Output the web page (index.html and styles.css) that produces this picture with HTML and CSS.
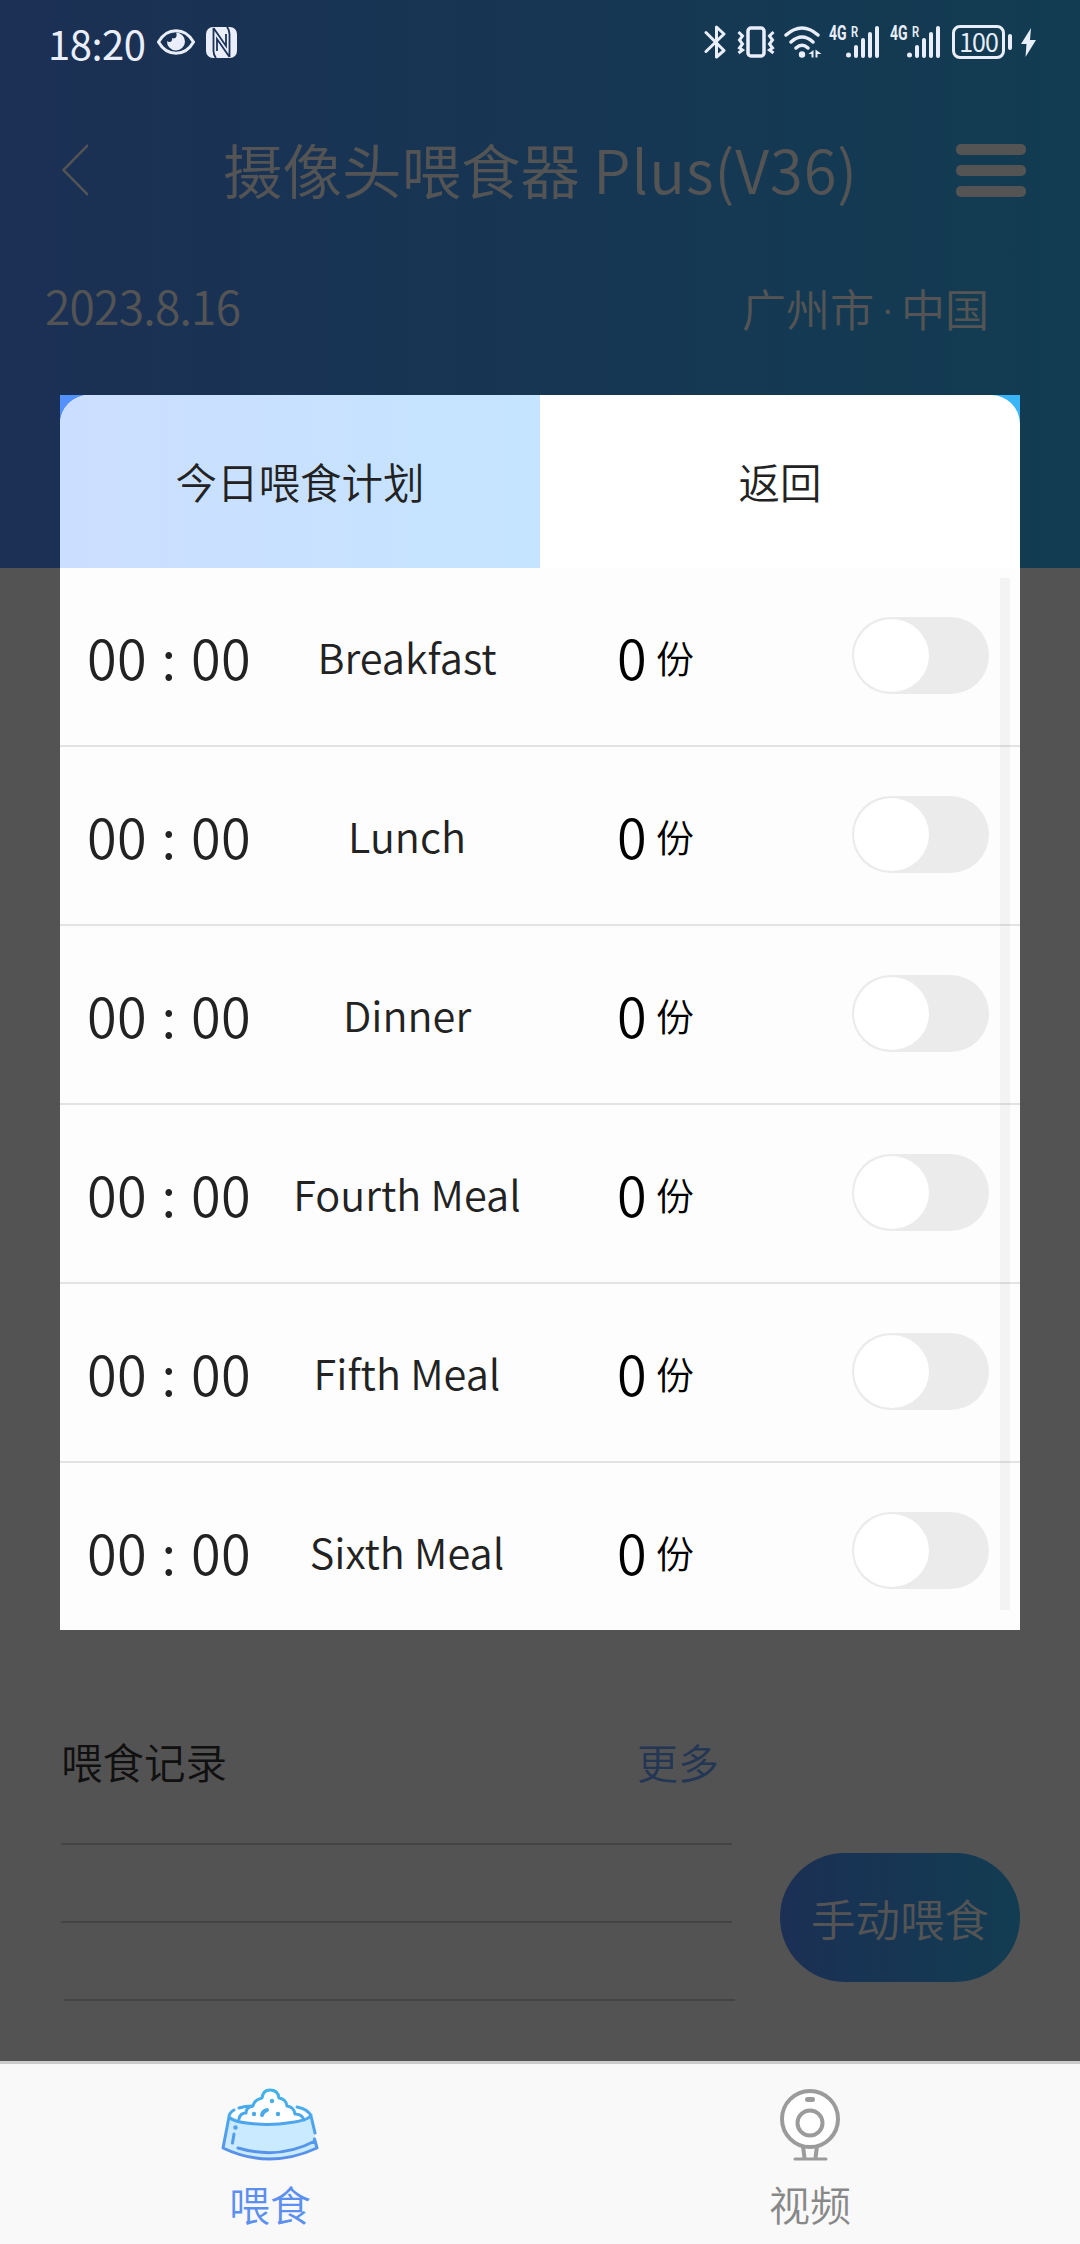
FILE: index.html
```html
<!DOCTYPE html>
<html lang="zh-CN">
<head>
  <meta charset="UTF-8" />
  <meta name="viewport" content="width=device-width, initial-scale=1.0"/>
  <title>摄像头喂食器 Plus(V36)</title>
  <link rel="stylesheet" href="styles.css">
</head>
<body>
  <div class="screen">
    <div class="top">
      <!-- Status bar -->
      <div class="status-bar">
        <span class="clock">18:20</span>
        <svg class="icon-eye" width="38" height="26" viewBox="0 0 38 26">
          <path d="M1.500 13C10-2 28-2 36.500 13C28 28 10 28 1.500 13Z" fill="none" stroke="#e9eefa" stroke-width="3"/>
          <path d="M10 12a9 9 0 1 0 9-8.500c2 4-1 7-4 5.500c1 4-3 5-5 3z" fill="#e9eefa"/>
        </svg>
        <svg class="icon-nfc" width="31" height="31" viewBox="0 0 31 31">
          <rect width="31" height="31" rx="7" fill="#e9eefa"/>
          <path d="M10 31Q7.500 28 7.500 24V1M7.500 1L20 19V7M21 0Q23.500 3 23.500 7V30M23.500 30L11 12V24" fill="none" stroke="#1b3158" stroke-width="1.800"/>
        </svg>
        <div class="status-right">
          <svg width="22" height="34" viewBox="0 0 22 34" fill="none" stroke="#e9eefa" stroke-width="3" stroke-linejoin="round" stroke-linecap="round">
            <path d="M2 7.500L20 25.500L12.500 32V2L20 9L2 26.500"/>
          </svg>
          <svg class="icon-vibrate" width="38" height="32" viewBox="0 0 38 32" fill="none" stroke="#e9eefa">
            <rect x="11" y="2" width="16" height="28" rx="3" stroke-width="3.500"/>
            <path d="M1.500 6l4 4-3 4 3 4-3 4 3 2-4 3M36.500 6l-4 4 3 4-3 4 3 4-3 2 4 3" stroke-width="3"/>
          </svg>
          <svg class="icon-wifi" width="38" height="32" viewBox="0 0 38 32" fill="none" stroke="#e9eefa" stroke-width="3.500" stroke-linecap="round">
            <path d="M2 9Q18 -5 34 9M7 16Q18 6 29 16M12 22Q18 16.500 24 22"/>
            <circle cx="18" cy="28.500" r="3.200" fill="#e9eefa" stroke="none"/>
            <path d="M24.500 28l5-4v7.500h-2V28zM31.500 23.500l6 4.500-4 0v3.500h-2z" fill="#e9eefa" stroke="none"/>
          </svg>
          <div class="signal">
            <span class="net">4G</span><span class="roam">R</span>
            <svg width="34" height="32" viewBox="0 0 34 32" fill="#e9eefa">
              <circle cx="2.500" cy="29" r="2.500"/><rect x="8" y="19" width="4" height="13" rx="2"/><rect x="15" y="12" width="4" height="20" rx="2"/><rect x="22" y="6" width="4" height="26" rx="2"/><rect x="29" y="0" width="4" height="32" rx="2"/>
            </svg>
          </div>
          <div class="signal second">
            <span class="net">4G</span><span class="roam">R</span>
            <svg width="34" height="32" viewBox="0 0 34 32" fill="#e9eefa">
              <circle cx="2.500" cy="29" r="2.500"/><rect x="8" y="19" width="4" height="13" rx="2"/><rect x="15" y="12" width="4" height="20" rx="2"/><rect x="22" y="6" width="4" height="26" rx="2"/><rect x="29" y="0" width="4" height="32" rx="2"/>
            </svg>
          </div>
          <div class="battery">100</div>
          <svg class="icon-bolt" width="15" height="29" viewBox="0 0 15 29"><path d="M10 0L0 16h5.500L4.500 29L15 12H9z" fill="#e9eefa"/></svg>
        </div>
      </div>

      <!-- Title -->
      <header>
        <svg width="26" height="52" viewBox="0 0 26 52"><path d="M26 1L1.500 26L26 51" fill="none" stroke="#fff" stroke-width="2.500"/></svg>
        <h1>摄像头喂食器 <span>Plus(V36)</span></h1>
        <div class="menu"><i></i><i></i><i></i></div>
      </header>
      <div class="info">
        <span class="date">2023.8.16</span>
        <span class="city">广州市<span class="dot">·</span>中国</span>
      </div>
    </div>

    <!-- Feeding records -->
    <div class="records">
      <div class="record-list">
        <div class="record-head">
          <h2>喂食记录</h2>
          <a class="more">更多</a>
        </div>
        <div class="line"></div>
        <div class="line"></div>
        <div class="line last"></div>
      </div>
      <button class="feed-btn">手动喂食</button>
    </div>

    <!-- Bottom tabs -->
    <nav>
      <div class="tab active">
        <svg width="98" height="74" viewBox="0 0 98 74" fill="none" stroke-width="3" stroke-linecap="round" stroke-linejoin="round">
          <defs>
            <linearGradient id="bowl" gradientUnits="userSpaceOnUse" x1="0" y1="0" x2="0" y2="74">
              <stop offset="0" stop-color="#42b4ea"/>
              <stop offset="0.5" stop-color="#4da4ee"/>
              <stop offset="1" stop-color="#5b8ce8"/>
            </linearGradient>
          </defs>
          <path d="M8 28L2 60Q48 82 96 60L90 28Q50 43 8 28Z" fill="#c9eaff"/>
          <path d="M8 27Q12 20 32 18L66 18Q86 20 90 26Q74 36 48 36Q22 36 8 27Z" fill="#fff"/>
          <path d="M17 32Q19 25 25 25Q25 19 32 18Q33 12 41 10Q42 2 49 2Q57 2 58 10Q65 11 66 18Q73 19 74 26Q81 26 83 33Q50 41 17 32Z" fill="#fff"/>
          <g stroke="url(#bowl)">
            <path d="M18 31Q19 25 25 25Q25 19 32 18Q33 12 41 10Q42 2 49 2Q57 2 58 10Q65 11 66 18Q73 19 74 26Q81 26 83 32"/>
            <path d="M13 22Q8 25 8 29L2 60Q48 82 96 60L93.500 51M18 20Q24 18 31 18M76 19Q87 21 90 28L94 45M8 29Q12 34 30 35.500Q50 38 70 34.500Q88 32 90 27M17 60Q58 72 94 53M13 46L11.500 55"/>
            <path d="M41 27Q42 23 46 22" stroke-width="4"/>
          </g>
          <g fill="url(#bowl)"><circle cx="51" cy="13" r="2.200"/><circle cx="33" cy="26" r="2.200"/><circle cx="57" cy="26" r="2.200"/><circle cx="14.500" cy="39.500" r="2.200"/></g>
        </svg>
        <span>喂食</span>
      </div>
      <div class="tab">
        <svg width="62" height="74" viewBox="0 0 62 74" fill="none" stroke="#9b9b9b" stroke-width="4">
          <path d="M24 58l1.500 12M38 58l-1.500 12"/>
          <circle cx="31" cy="31" r="28" fill="#fff"/>
          <circle cx="31" cy="35" r="12.500"/>
          <path d="M28.500 11.500h5" stroke-width="5" stroke-linecap="round"/>
          <path d="M16 71h31" stroke-linecap="round" stroke-width="3"/>
        </svg>
        <span>视频</span>
      </div>
    </nav>

    <!-- Feeding plan dialog -->
    <div class="overlay">
      <div class="dialog">
        <div class="dialog-tabs">
          <div class="dialog-tab selected">今日喂食计划</div>
          <div class="dialog-tab">返回</div>
        </div>
        <div class="meals">
          <div class="meal"><span class="time">00 : 00</span><span class="name">Breakfast</span><span class="count">0</span><span class="unit">份</span><span class="switch"></span></div>
          <div class="meal"><span class="time">00 : 00</span><span class="name">Lunch</span><span class="count">0</span><span class="unit">份</span><span class="switch"></span></div>
          <div class="meal"><span class="time">00 : 00</span><span class="name">Dinner</span><span class="count">0</span><span class="unit">份</span><span class="switch"></span></div>
          <div class="meal"><span class="time">00 : 00</span><span class="name">Fourth Meal</span><span class="count">0</span><span class="unit">份</span><span class="switch"></span></div>
          <div class="meal"><span class="time">00 : 00</span><span class="name">Fifth Meal</span><span class="count">0</span><span class="unit">份</span><span class="switch"></span></div>
          <div class="meal"><span class="time">00 : 00</span><span class="name">Sixth Meal</span><span class="count">0</span><span class="unit">份</span><span class="switch"></span></div>
          <div class="scrollbar"></div>
        </div>
      </div>
    </div>
  </div>
</body>
</html>
```

FILE: styles.css
```css
* {
  box-sizing: border-box;
}

body {
  margin: 0;
  font-family: "Noto Sans CJK SC", "Noto Sans", sans-serif;
  font-weight: 350;
  color: #222;
}

svg {
  display: block;
  flex: none;
}

.screen {
  position: relative;
  width: 1080px;
  height: 2244px;
  display: flex;
  flex-direction: column;
  background: #fafafa;
  overflow: hidden;
}

/* Blue header */
.top {
  flex: none;
  height: 568px;
  background: linear-gradient(90deg, #5391ff, #38b6f8);
  color: #fff;
}

.status-bar {
  position: relative;
  z-index: 2; /* stays bright above the overlay */
  height: 84px;
  padding: 0 44px 0 48px;
  display: flex;
  align-items: center;
  color: #e9eefa;
}

.clock {
  width: 109px;
  font-size: 40px;
  line-height: 84px;
  padding-top: 2px;
  letter-spacing: -0.5px;
  font-weight: 400;
}

.icon-nfc {
  margin-left: 11px;
}

.status-right {
  display: flex;
  align-items: center;
  margin-left: auto;
}

.icon-vibrate {
  margin-left: 11px;
}

.icon-wifi {
  margin-left: 9px;
}

.signal {
  display: flex;
  align-items: flex-start;
  width: 51px;
  height: 32px;
  margin-left: 7px;
  font-family: Roboto, sans-serif;
}

.signal.second {
  margin-left: 10px;
}

.signal svg {
  margin-left: -11px;
}

.net {
  width: 22px;
  flex: none;
  font-size: 20px;
  font-weight: 700;
  line-height: 15px;
  transform: scaleX(0.7);
  transform-origin: left;
}

.roam {
  width: 6px;
  flex: none;
  font-size: 15px;
  font-weight: 600;
  line-height: 12px;
  transform: scaleX(0.75);
  transform-origin: left;
}

.battery {
  position: relative;
  width: 53px;
  height: 34px;
  margin-left: 11px;
  border: 3px solid #e9eefa;
  border-radius: 8px;
  font-size: 25px;
  font-weight: 400;
  line-height: 26px;
  text-align: center;
  letter-spacing: -1px;
}

.battery::after {
  content: '';
  position: absolute;
  right: -10px;
  top: 6px;
  width: 4px;
  height: 16px;
  border-radius: 2px;
  background: #e9eefa;
}

.icon-bolt {
  margin-left: 16px;
}

header {
  height: 172px;
  padding: 0 54px 0 62px;
  display: flex;
  align-items: center;
  justify-content: space-between;
}

h1 {
  margin: 0 -12px 4px 0;
  width: 640px;
  padding-left: 15px;
  font-size: 59.5px;
  font-weight: 350;
  white-space: nowrap;
}

h1 span {
  letter-spacing: 1px;
}

.menu {
  display: flex;
  flex-direction: column;
  gap: 10px;
}

.menu i {
  width: 70px;
  height: 11px;
  border-radius: 5px;
  background: #fff;
}

.info {
  display: flex;
  justify-content: space-between;
  padding: 16px 91px 0 45px;
  line-height: 66px;
}

.date {
  font-size: 46px;
  letter-spacing: -0.7px;
}

.city {
  font-size: 44px;
  padding-top: 3px;
}

.dot {
  display: inline-block;
  width: 27px;
  font-family: "Noto Sans", sans-serif;
  text-align: center;
}

/* Records */
.records {
  flex: none;
  height: 1493px;
  display: flex;
  justify-content: space-between;
  padding: 1163px 60px 0 61px;
}

.record-list {
  width: 673px;
}

.record-head {
  display: flex;
  justify-content: space-between;
  height: 112px;
  padding-right: 15px;
  line-height: 61px;
}

h2 {
  margin: 0;
  font-size: 41.5px;
  font-weight: 350;
  color: #333;
}

.more {
  font-size: 41px;
  color: #6aa5ff;
}

.line {
  width: 671px;
  height: 2px;
  margin-bottom: 76px;
  background: #cfcfcf;
}

.line.last {
  margin-left: 3px;
}

.feed-btn {
  width: 240px;
  height: 129px;
  margin-top: 122px;
  padding: 0;
  border: none;
  border-radius: 65px;
  background: linear-gradient(90deg, #5391ff, #38b6f8);
  color: #fff;
  font: inherit;
  font-size: 44.5px;
}

/* Bottom tabs */
nav {
  position: relative;
  z-index: 2;
  flex: none;
  display: flex;
  height: 183px;
  border-top: 3px solid #ccc;
  background: #f9f9f9;
}

.tab {
  flex: 1;
  display: flex;
  flex-direction: column;
  align-items: center;
  padding-top: 24px;
  font-size: 41px;
  line-height: 60px;
  color: #888;
}

.tab span {
  margin-top: 11px;
}

.tab.active {
  color: #5b8ff0;
}

/* Dialog */
.overlay {
  position: absolute;
  inset: 0;
  padding: 395px 60px 0;
  background: rgba(0, 0, 0, 0.67);
}

.dialog {
  height: 1235px;
  background: linear-gradient(90deg, #5391ff, #38b6f8);
}

.dialog-tabs {
  display: flex;
  height: 173px;
  border-radius: 29px 29px 0 0;
  background: #fff;
  overflow: hidden;
}

.dialog-tab {
  flex: 1;
  font-size: 41.5px;
  line-height: 173px;
  text-align: center;
}

.dialog-tab.selected {
  background: linear-gradient(90deg, #ccdeff, #c4e4ff);
}

.meals {
  position: relative;
  height: 1062px;
  background: #fdfdfd;
  overflow: hidden;
}

.meal {
  display: flex;
  height: 179px;
  padding: 0 31px 0 27px;
  border-bottom: 2px solid #e2e4e4;
  line-height: 177px;
  white-space: nowrap;
}

.time {
  width: 185px;
  font-size: 54px;
  letter-spacing: 0.4px;
  word-spacing: 2px;
}

.name {
  width: 270px;
  font-size: 41.5px;
  text-align: center;
}

.count {
  width: 39px;
  margin-left: 75px;
  font-size: 54px;
  color: #000;
}

.unit {
  width: 50px;
  font-size: 38px;
  color: #000;
}

.switch {
  width: 137px;
  height: 77px;
  margin: 49px 0 0 auto;
  padding: 2px;
  border-radius: 39px;
  background: #ebebeb;
}

.switch::before {
  content: '';
  display: block;
  width: 75px;
  height: 73px;
  border-radius: 50%;
  background: #fff;
}

.scrollbar {
  position: absolute;
  top: 10px;
  right: 10px;
  width: 10px;
  height: 1032px;
  background: rgba(0, 0, 0, 0.04);
}
```
